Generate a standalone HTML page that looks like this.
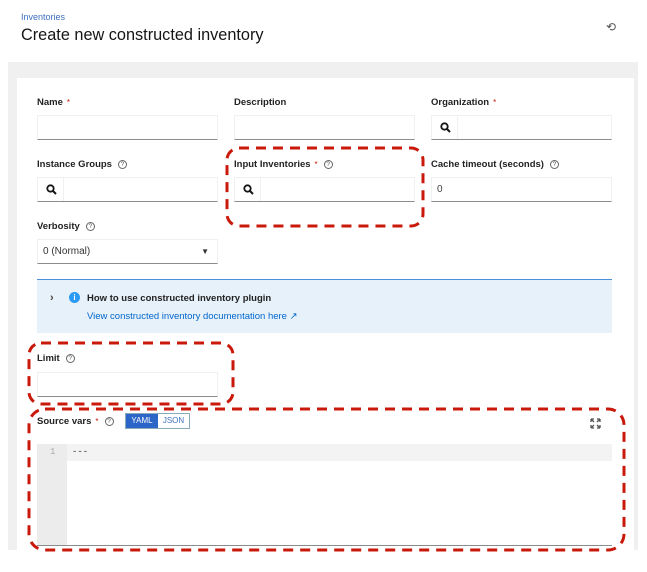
<!DOCTYPE html>
<html><head><style>
*{box-sizing:border-box;margin:0;padding:0}
body{width:647px;height:572px;background:#fff;font-family:"Liberation Sans",sans-serif;position:relative;overflow:hidden;color:#151515}
.a{position:absolute}
.lbl{font-size:9.5px;font-weight:bold;color:#222}
.req{color:#c9190b;font-weight:normal;margin-left:4px;font-size:8px}
.q{display:inline-block;width:9px;height:9px;border:1px solid #666;border-radius:50%;font-size:6.5px;text-align:center;line-height:7px;color:#555;font-weight:normal;margin-left:6px;vertical-align:middle}
.inp{position:absolute;background:#fff;border:1px solid #f0f0f0;border-bottom:1px solid #8a8d90;height:25px}
.srch{position:absolute;left:0;top:0;width:26px;height:23px;border-right:1px solid #f0f0f0}
.srch svg{position:absolute;left:8px;top:6px}
</style></head><body>
<div class="a" style="left:21px;top:12px;font-size:9px;color:#3c6fc0">Inventories</div>
<div class="a" style="left:21px;top:26px;font-size:16.3px;color:#151515">Create new constructed inventory</div>
<div class="a" style="left:606px;top:20px;font-size:12px;color:#555">⟲</div>
<div class="a" style="left:8px;top:62px;width:630px;height:488px;background:#f0f0f0"></div>
<div class="a" style="left:17px;top:78px;height:472px;background:#fff;width:617px"></div>

<div class="a lbl" style="left:37px;top:97px">Name<span class="req">*</span></div>
<div class="inp" style="left:37px;top:115px;width:181px"></div>
<div class="a lbl" style="left:234px;top:97px">Description</div>
<div class="inp" style="left:234px;top:115px;width:181px"></div>
<div class="a lbl" style="left:431px;top:97px">Organization<span class="req">*</span></div>
<div class="inp" style="left:431px;top:115px;width:181px"><div class="srch"><svg width="11" height="11" viewBox="0 0 11 11"><circle cx="4.5" cy="4.5" r="3.2" fill="none" stroke="#151515" stroke-width="1.8"/><path d="M7 7L10 10" stroke="#151515" stroke-width="2"/></svg></div></div>

<div class="a lbl" style="left:37px;top:159px">Instance Groups<span class="q">?</span></div>
<div class="inp" style="left:37px;top:177px;width:181px"><div class="srch"><svg width="11" height="11" viewBox="0 0 11 11"><circle cx="4.5" cy="4.5" r="3.2" fill="none" stroke="#151515" stroke-width="1.8"/><path d="M7 7L10 10" stroke="#151515" stroke-width="2"/></svg></div></div>
<div class="a lbl" style="left:234px;top:159px">Input Inventories<span class="req">*</span><span class="q">?</span></div>
<div class="inp" style="left:234px;top:177px;width:181px"><div class="srch"><svg width="11" height="11" viewBox="0 0 11 11"><circle cx="4.5" cy="4.5" r="3.2" fill="none" stroke="#151515" stroke-width="1.8"/><path d="M7 7L10 10" stroke="#151515" stroke-width="2"/></svg></div></div>
<div class="a lbl" style="left:431px;top:159px">Cache timeout (seconds)<span class="q">?</span></div>
<div class="inp" style="left:431px;top:177px;width:181px;font-size:10px;padding:6px 5px;color:#444">0</div>

<div class="a lbl" style="left:37px;top:221px">Verbosity<span class="q">?</span></div>
<div class="inp" style="left:37px;top:239px;width:181px;font-size:10px;padding:6px 5px;color:#333">0 (Normal)<span style="position:absolute;right:8px;top:7px;font-size:8px">▼</span></div>

<div class="a" style="left:37px;top:279px;width:575px;height:54px;background:#e7f1fa;border-top:1px solid #4a90d9"></div>
<div class="a" style="left:50px;top:292px;font-size:11px;color:#444;font-weight:bold">›</div>
<div class="a" style="left:69px;top:292px;width:11px;height:11px;border-radius:50%;background:#2b9af3;color:#fff;font-size:8px;text-align:center;line-height:11px;font-weight:bold">i</div>
<div class="a" style="left:87px;top:293px;font-size:9.5px;font-weight:bold;color:#222">How to use constructed inventory plugin</div>
<div class="a" style="left:87px;top:311px;font-size:9.5px;color:#0066cc">View constructed inventory documentation here ↗</div>

<div class="a lbl" style="left:37px;top:353px">Limit<span class="q">?</span></div>
<div class="inp" style="left:37px;top:372px;width:181px"></div>

<div class="a lbl" style="left:37px;top:416px">Source vars<span class="req">*</span><span class="q">?</span></div>
<div class="a" style="left:125px;top:413px;width:65px;height:16px;border:1px solid #8ab;font-size:8px;display:flex">
<div style="width:32px;background:#2a65c7;color:#fff;text-align:center;line-height:14px">YAML</div>
<div style="flex:1;color:#3c6fc0;text-align:center;line-height:14px">JSON</div></div>
<svg class="a" style="left:590px;top:418px" width="11" height="11" viewBox="0 0 11 11"><path d="M1 1L4 4M1 1h3M1 1v3M10 1L7 4M10 1H7M10 1v3M1 10L4 7M1 10h3M1 10V7M10 10L7 7M10 10H7M10 10V7" stroke="#555" stroke-width="1.3" fill="none"/></svg>
<div class="a" style="left:37px;top:444px;width:575px;height:102px;border-bottom:1px solid #8a8d90"></div>
<div class="a" style="left:37px;top:444px;width:30px;height:101px;background:#ececec"></div>
<div class="a" style="left:67px;top:444px;width:545px;height:17px;background:#f3f3f3"></div>
<div class="a" style="left:50px;top:447px;font-size:9px;color:#aaa;font-family:'Liberation Mono',monospace">1</div>
<div class="a" style="left:72px;top:447px;font-size:9px;color:#333;font-family:'Liberation Mono',monospace">---</div>

<svg class="a" style="left:0;top:0" width="647" height="572">
<g fill="none" stroke="#c9190b" stroke-width="3" stroke-dasharray="10 7">
<rect x="227" y="148" width="196" height="78" rx="12"/>
<rect x="29" y="343" width="204" height="61" rx="12"/>
<rect x="29" y="409" width="595" height="141" rx="16"/>
</g></svg>
</body></html>
